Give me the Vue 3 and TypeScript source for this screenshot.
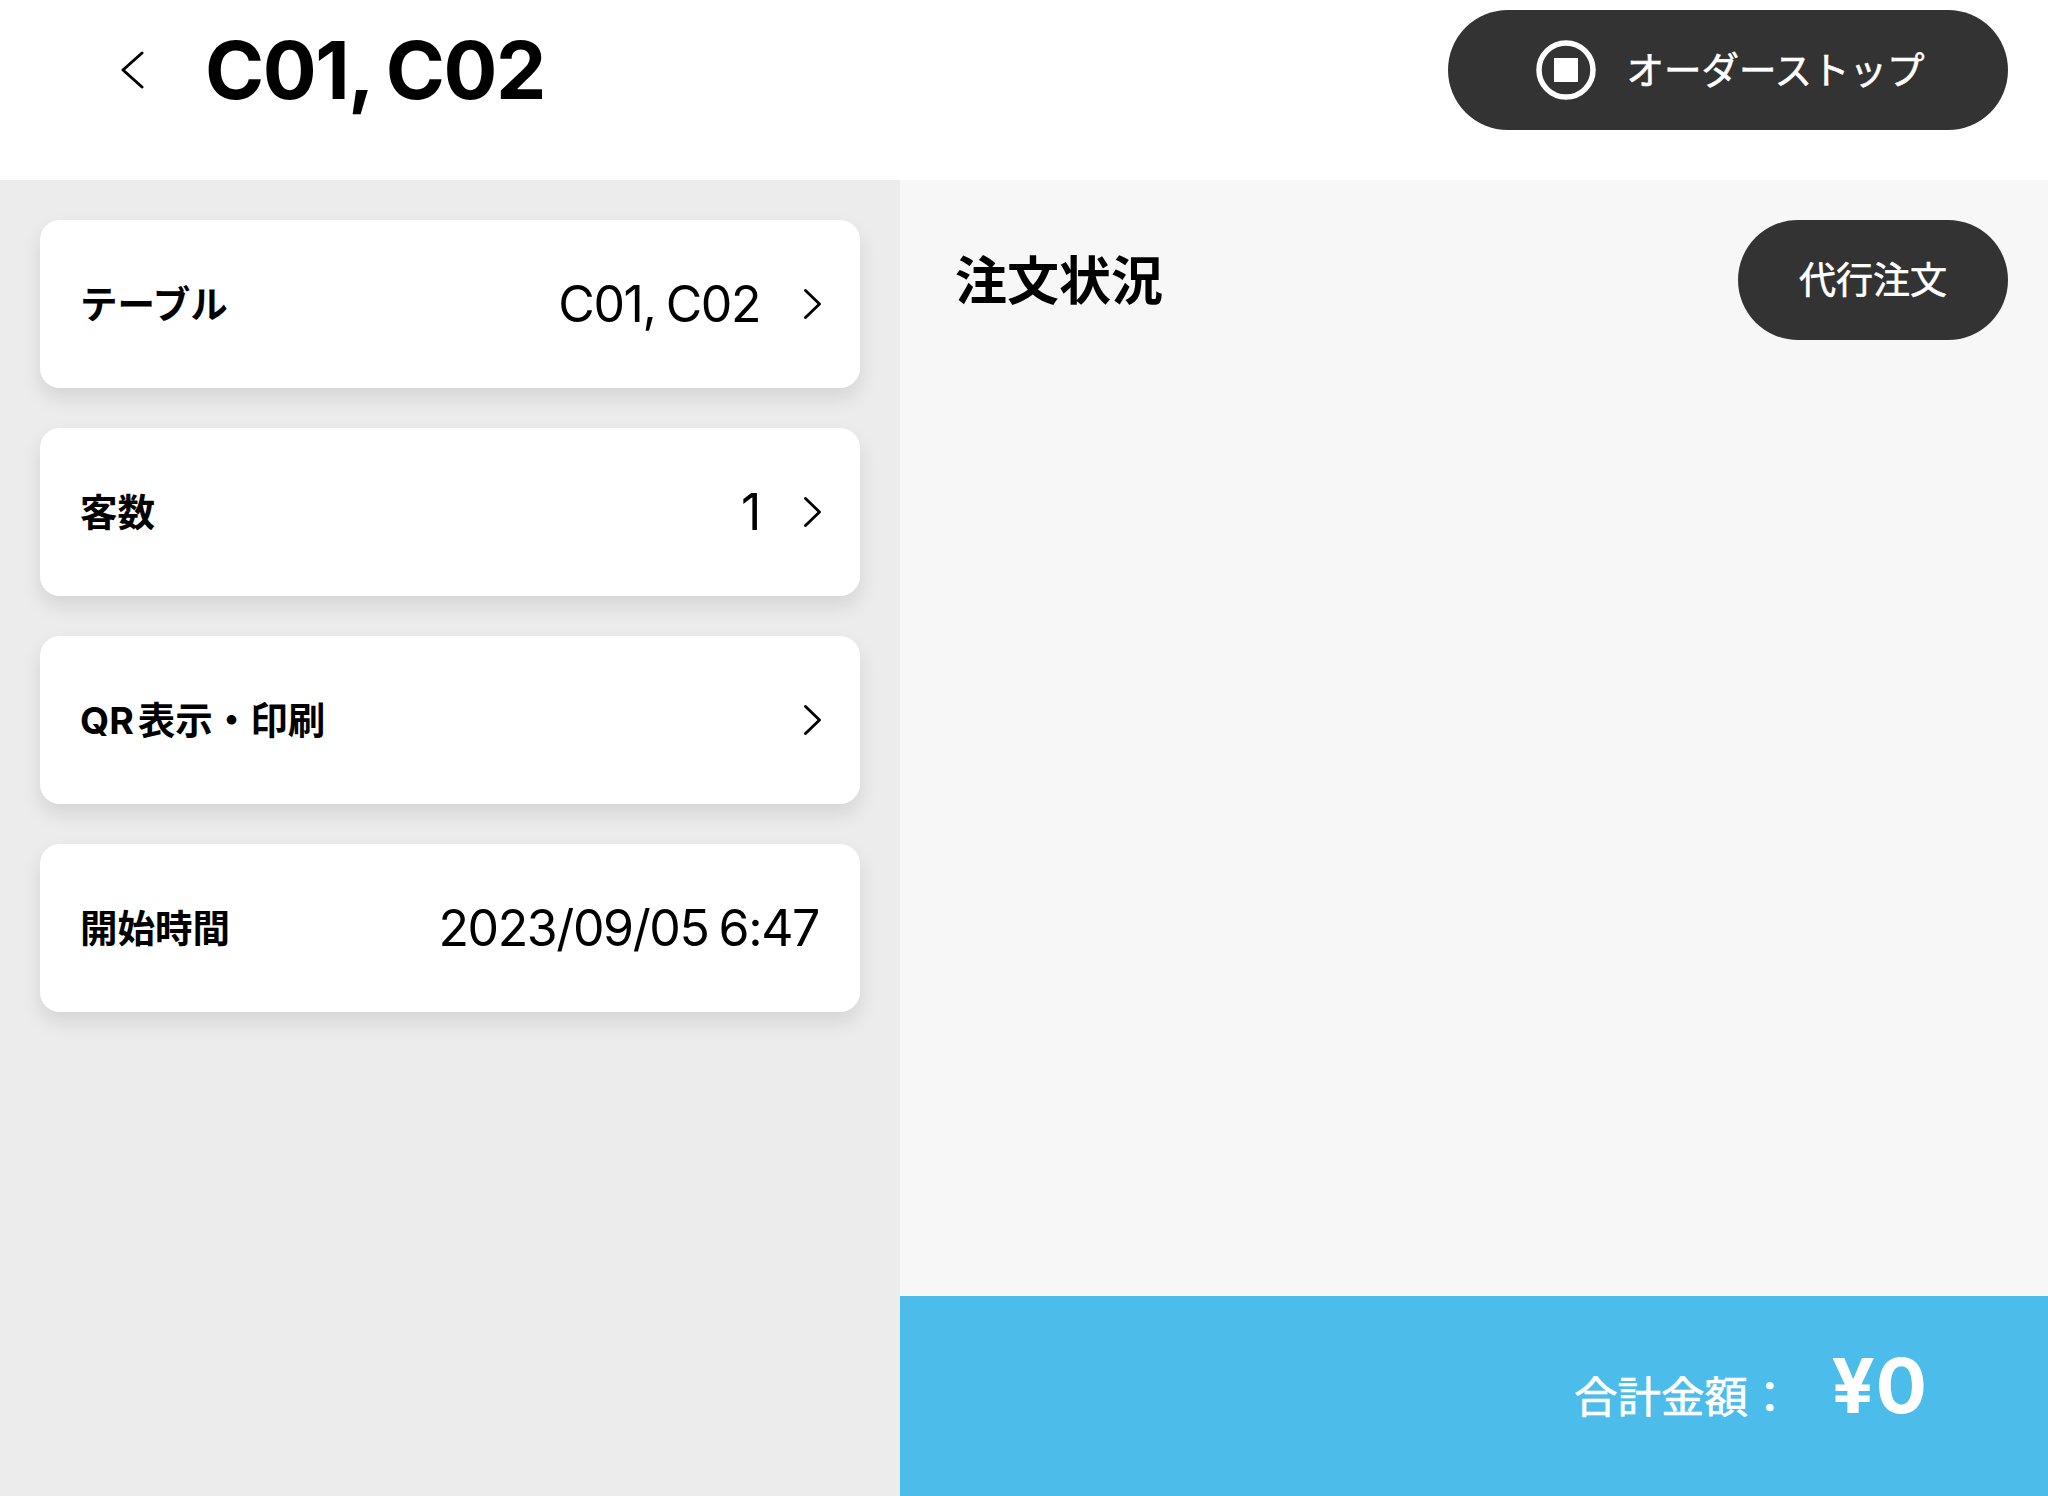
<script setup lang="ts">
interface Row { label: string; value?: string; arrow: boolean }
const rows: Row[] = [
  { label: 'テーブル', value: 'C01, C02', arrow: true },
  { label: '客数', value: '1', arrow: true },
  { label: 'QR 表示・印刷', arrow: true },
  { label: '開始時間', value: '2023/09/05 6:47', arrow: false },
]
</script>

<template>
  <div class="page">
    <header class="top">
      <div class="top-left">
        <button class="back" aria-label="戻る">
          <svg width="24" height="40" viewBox="0 0 24 40" fill="none"><path d="M22 3 3 20 22 37" stroke="#000" stroke-width="3" stroke-linecap="round" stroke-linejoin="round"/></svg>
        </button>
        <h1 class="title">C01, C02</h1>
      </div>
      <button class="pill stop">
        <svg width="60" height="60" viewBox="0 0 60 60" fill="none"><circle cx="30" cy="30" r="27" stroke="#fff" stroke-width="5.5"/><rect x="18" y="18" width="24" height="24" fill="#fff"/></svg>
        <span class="stop-text">オーダーストップ</span>
      </button>
    </header>
    <main class="body">
      <section class="left">
        <div v-for="r in rows" :key="r.label" class="card" :class="{ plain: !r.arrow }">
          <span class="label">{{ r.label }}</span>
          <span class="right">
            <span v-if="r.value" class="value">{{ r.value }}</span>
            <svg v-if="r.arrow" class="chev" width="17" height="30" viewBox="0 0 17 30" fill="none"><path d="M1.5 1.5 15.5 15 1.5 28.5" stroke="#000" stroke-width="2.8" stroke-linecap="round" stroke-linejoin="round"/></svg>
          </span>
        </div>
      </section>
      <section class="orders">
        <div class="orders-main">
          <h2 class="orders-title">注文状況</h2>
          <button class="pill proxy">代行注文</button>
        </div>
        <footer class="total">
          <span class="total-label">合計金額：</span>
          <span class="total-value">¥0</span>
        </footer>
      </section>
    </main>
  </div>
</template>

<style scoped>
.page {
  width: 2048px;
  height: 1496px;
  display: flex;
  flex-direction: column;
  background: #fff;
  color: #000;
  font-family: Inter, "Noto Sans CJK JP", sans-serif;
}
button { border: 0; padding: 0; background: none; font: inherit; }
.top {
  height: 180px;
  flex: none;
  display: flex;
  justify-content: space-between;
  padding: 10px 40px 0 120px;
  box-sizing: border-box;
  background: #fff;
}
.top-left { display: flex; align-items: center; height: 120px; }
.back { display: flex; width: 85px; }
.title { margin: 0; font-size: 80px; font-weight: 700; letter-spacing: -1.5px; word-spacing: -2.5px; line-height: 1; }
.pill {
  background: #333;
  color: #fff;
  border-radius: 60px;
  height: 120px;
  display: flex;
  align-items: center;
  justify-content: center;
}
.stop { width: 560px; gap: 30px; font-size: 37.5px; padding-left: 5px; box-sizing: border-box; -webkit-text-stroke: 0.6px #fff; }
.stop-text { margin-bottom: 5px; }
.body { flex: 1; display: flex; min-height: 0; }
.left {
  width: 900px;
  flex: none;
  box-sizing: border-box;
  padding: 40px;
  background: #ececec;
  display: flex;
  flex-direction: column;
  gap: 40px;
}
.card {
  height: 168px;
  box-sizing: border-box;
  padding: 0 39px 0 40px;
  display: flex;
  align-items: center;
  justify-content: space-between;
  background: #fff;
  border-radius: 20px;
  box-shadow: 0 10px 20px rgba(0, 0, 0, 0.1);
}
.card.plain { padding-right: 41px; }
.label { font-size: 37.5px; font-weight: 700; word-spacing: -5px; margin-bottom: 5px; }
.right { display: flex; align-items: center; gap: 44px; }
.value { font-size: 50px; letter-spacing: -1.4px; word-spacing: -2.5px; }
.chev { display: block; }
.orders { flex: 1; display: flex; flex-direction: column; background: #f7f7f7; }
.orders-main {
  flex: 1;
  display: flex;
  justify-content: space-between;
  align-items: flex-start;
  padding: 40px 40px 0 55px;
}
.orders-title { margin: 0; font-size: 52px; font-weight: 700; line-height: 124px; }
.proxy { width: 270px; font-size: 37px; padding-bottom: 5px; box-sizing: border-box; -webkit-text-stroke: 0.6px #fff; }
.total {
  height: 200px;
  flex: none;
  box-sizing: border-box;
  background: #4cbdea;
  color: #fff;
  display: flex;
  align-items: center;
  justify-content: flex-end;
  padding-right: 120px;
}
.total-label { font-size: 43.5px; margin-bottom: 4px; -webkit-text-stroke: 0.7px #fff; }
.total-value { font-size: 76px; font-weight: 700; letter-spacing: 1px; margin-left: 40px; margin-bottom: 22px; }
</style>
